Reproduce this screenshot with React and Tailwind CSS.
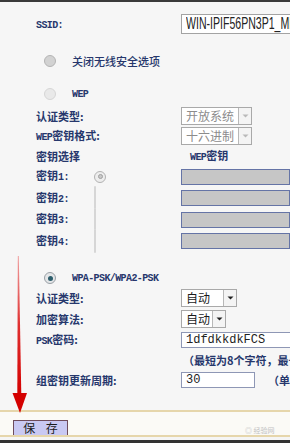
const cjk = "font-['Noto_Sans_CJK_SC',sans-serif]";
const mono = "font-['Liberation_Mono',monospace] text-[10px] tracking-[-0.6px] font-bold";
const label = `text-[11px] leading-none text-[#26376c] font-bold ${cjk} whitespace-nowrap`;

function Row({ h = 'h-[20px]', mt = '', left, children }) {
  return (
    <div className={`flex items-center ${h} ${mt}`}>
      <div className={`w-[181px] shrink-0 pl-[36px] ${label}`}>{left}</div>
      <div className="flex items-center whitespace-nowrap">{children}</div>
    </div>
  );
}

function Radio({ kind }) {
  if (kind === 'on')
    return (
      <span className="w-[12px] h-[12px] rounded-full border border-[#9aa0a6] bg-[#e4e6e8] flex items-center justify-center">
        <span className="w-[5px] h-[5px] rounded-full bg-[#2c5d6b]" />
      </span>
    );
  if (kind === 'dot')
    return (
      <span className="w-[12px] h-[12px] rounded-full border border-[#b2b2b2] bg-[#ededed] flex items-center justify-center">
        <span className="w-[5px] h-[5px] rounded-full border border-[#a0a0a0] bg-[#c8c8c8]" />
      </span>
    );
  if (kind === 'gray')
    return <span className="w-[12px] h-[12px] rounded-full border border-[#b4b4b4] bg-[#d2d2d2]" />;
  return <span className="w-[12px] h-[12px] rounded-full border border-[#d6d6d6] bg-[#e9e9e9]" />;
}

function Select({ text, w, disabled }) {
  return (
    <div className={`flex h-[18px] ${w} border border-[#a9a9a9] bg-white`}>
      <div className={`flex-1 pl-[4px] flex items-center text-[12px] leading-none ${cjk} ${disabled ? 'text-[#8c8c8c]' : 'text-[#1c1c1c]'}`}>
        {text}
      </div>
      <div className="w-[13px] border-l border-[#b8b8b8] bg-[#f4f4f4] flex items-center justify-center">
        <svg width="7" height="4" viewBox="0 0 7 4">
          <path d="M0.5 0.5 L6.5 0.5 L3.5 3.5 Z" fill={disabled ? '#b9b9b9' : '#222'} />
        </svg>
      </div>
    </div>
  );
}

function KeyInput() {
  return <div className="w-[140px] h-[16px] border-[1.5px] border-[#6574a6] bg-[#c6c6c6]" />;
}

export default function App() {
  return (
    <div className="relative w-[290px] h-[443px] overflow-hidden bg-[#f6f6f6] flex flex-col">
      <div className="h-[2px] bg-[#3a3a3a] shrink-0" />

      <Row h="h-[24px]" mt="mt-[10px]" left={<span className={mono}>SSID:</span>}>
        <div className="w-[140px] h-[20px] border border-[#a3a3a3] bg-white flex items-center pl-[4px] overflow-hidden">
          <span className="inline-block origin-left scale-x-[0.66] text-[16px] leading-none text-[#222] font-['Liberation_Sans',sans-serif]">
            WIN-IPIF56PN3P1_MM
          </span>
        </div>
      </Row>

      <div className="flex items-center h-[22px] mt-[14px] pl-[44px] gap-[16px]">
        <Radio kind="gray" />
        <span className={`text-[11px] leading-none text-[#26376c] font-medium ${cjk}`}>关闭无线安全选项</span>
      </div>

      <div className="flex items-center h-[20px] mt-[12px] pl-[44px] gap-[16px]">
        <Radio kind="faint" />
        <span className={`${mono} text-[#26376c]`}>WEP</span>
      </div>

      <Row mt="mt-[2px]" left="认证类型:">
        <Select text="开放系统" w="w-[71px]" disabled />
      </Row>
      <Row left={<><span className={mono}>WEP</span>密钥格式:</>}>
        <Select text="十六进制" w="w-[71px]" disabled />
      </Row>
      <Row left="密钥选择">
        <span className={`ml-[9px] ${mono} text-[9px] text-[#26376c]`}>
          WEP<span className={`${cjk} text-[11px] tracking-normal`}>密钥</span>
        </span>
      </Row>

      {[1, 2, 3, 4].map((n) => (
        <div key={n} className="flex items-center h-[21.5px]">
          <div className={`w-[58px] shrink-0 pl-[36px] ${label}`}>
            密钥<span className={mono}>{n}:</span>
          </div>
          <div className="w-[123px] shrink-0 pl-[36px]">
            <Radio kind={n === 1 ? 'dot' : 'faint'} />
          </div>
          <KeyInput />
        </div>
      ))}

      <div className="flex items-center h-[20px] mt-[16px] pl-[44px] gap-[16px]">
        <Radio kind="on" />
        <span className={`${mono} text-[#26376c]`}>WPA-PSK/WPA2-PSK</span>
      </div>

      <Row left="认证类型:">
        <Select text="自动" w="w-[56px]" />
      </Row>
      <Row h="h-[22px]" left="加密算法:">
        <Select text="自动" w="w-[45px]" />
      </Row>
      <Row left={<><span className={mono}>PSK</span>密码:</>}>
        <div className="w-[140px] h-[16px] border border-[#8e97b5] bg-white flex items-center pl-[4px]">
          <span className="text-[12px] leading-none text-[#222] font-['Liberation_Mono',monospace]">1dfdkkdkFCS</span>
        </div>
      </Row>
      <Row left="">
        <span className={`ml-[2px] ${label}`}>（最短为8个字符，最长为63个字符）</span>
      </Row>
      <Row left="组密钥更新周期:">
        <div className="w-[74px] h-[16px] border border-[#8e97b5] bg-white flex items-center pl-[4px]">
          <span className="text-[12px] leading-none text-[#222] font-['Liberation_Mono',monospace]">30</span>
        </div>
        <span className={`ml-[13px] ${label}`}>（单位为秒）</span>
      </Row>

      <div className="h-[2px] mt-[20px] bg-[#e6d6ab] shrink-0" />
      <div className="h-[23px] shrink-0 bg-[#fbfaf6] pl-[13px] pt-[3px]">
        <button className={`w-[55px] h-[17px] pl-[4px] border border-[#6e4c5c] bg-[#c9c9f3] text-[12px] leading-none text-[#1c1c1c] tracking-[4px] ${cjk}`}>
          保 存
        </button>
      </div>
      <div className="h-[2px] bg-[#e6d6ab] shrink-0" />
      <div className="h-[3px] bg-[#f5f5f5] shrink-0" />
      <div className="h-[3px] bg-[#333] shrink-0" />

      <span className={`absolute left-[245px] top-[427px] text-[7px] leading-none text-[#c2c2c2] ${cjk}`}>◎ 经验网</span>

      <svg className="absolute left-0 top-0 pointer-events-none" width="290" height="443" viewBox="0 0 290 443">
        <defs>
          <linearGradient id="ar" x1="0" y1="0" x2="0" y2="1">
            <stop offset="0" stopColor="#f0a0a0" />
            <stop offset="0.5" stopColor="#e03030" />
            <stop offset="1" stopColor="#d40000" />
          </linearGradient>
        </defs>
        <polygon points="17.8,256 18.8,256 21.3,395 17.3,395" fill="url(#ar)" />
        <polygon points="12.5,393 27,393 20,413" fill="#d40000" />
      </svg>
    </div>
  );
}
